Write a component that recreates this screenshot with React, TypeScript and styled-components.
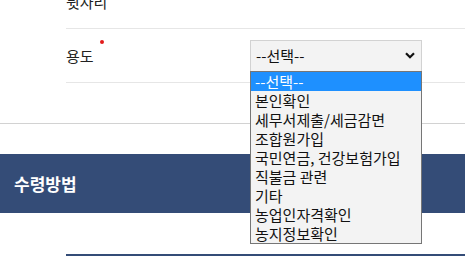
import React from 'react'
import styled, { createGlobalStyle } from 'styled-components'

const options = [
	'--선택--',
	'본인확인',
	'세무서제출/세금감면',
	'조합원가입',
	'국민연금, 건강보험가입',
	'직불금 관련',
	'기타',
	'농업인자격확인',
	'농지정보확인',
]

const GlobalStyle = createGlobalStyle`
	html, body {
		margin: 0;
		padding: 0;
		background: #fff;
		overflow: hidden;
	}
	body {
		font-family: "Noto Sans CJK KR", "Noto Sans", sans-serif;
		color: #222;
	}
`

export default function App() {
	return (
		<>
			<GlobalStyle />
			<Page>
				<FormSection>
					<Row>
						<Label>뒷자리</Label>
					</Row>
					<Row>
						<Label required>용도</Label>
						<SelectWrap>
							<SelectBox>
								<span>--선택--</span>
								<svg width="10" height="7" viewBox="0 0 10 7">
									<path d="M1 1.2 L5 5.2 L9 1.2" fill="none" stroke="#111" strokeWidth="2.2" />
								</svg>
							</SelectBox>
							<OptionList>
								{options.map((o, i) => (
									<OptionItem key={o} active={i === 0}>{o}</OptionItem>
								))}
							</OptionList>
						</SelectWrap>
					</Row>
				</FormSection>
				<Band>
					<BandTitle>수령방법</BandTitle>
				</Band>
				<BottomRule />
			</Page>
		</>
	)
}

const Page = styled.div`
	width: 465px;
	margin-top: -25px;
`

const FormSection = styled.section`
	padding-left: 66px;
	padding-bottom: 40px;
	border-bottom: 1px solid #d2d2d2;
`

const Row = styled.div`
	display: flex;
	align-items: center;
	height: 53px;
	border-bottom: 1px solid #e6e6e6;
`

const Label = styled.span<{ required?: boolean }>`
	position: relative;
	width: 184px;
	font-size: 15px;
	line-height: 20px;
	color: #222;
	&::after {
		content: '';
		display: ${p => (p.required ? 'block' : 'none')};
		position: absolute;
		left: 34px;
		top: -6px;
		width: 4px;
		height: 4px;
		border-radius: 50%;
		background: #e21b1b;
	}
`

const SelectWrap = styled.div`
	position: relative;
`

const SelectBox = styled.div`
	box-sizing: border-box;
	display: flex;
	align-items: center;
	justify-content: space-between;
	width: 172px;
	height: 32px;
	padding: 0 6px 0 5px;
	background: #f3f3f3;
	border: 1px solid #d2d2d2;
	font-size: 15px;
	color: #111;
`

const OptionList = styled.ul`
	position: absolute;
	left: 0;
	top: 31px;
	box-sizing: border-box;
	width: 172px;
	margin: 0;
	padding: 0;
	list-style: none;
	background: #f3f3f3;
	border: 1px solid #767676;
	z-index: 5;
`

const OptionItem = styled.li<{ active?: boolean }>`
	height: 19px;
	line-height: 19px;
	padding-left: 4px;
	font-size: 15px;
	white-space: nowrap;
	color: ${p => (p.active ? '#fff' : '#111')};
	background: ${p => (p.active ? '#1e90ff' : 'transparent')};
`

const Band = styled.div`
	display: flex;
	align-items: center;
	height: 59px;
	margin-top: 30px;
	padding-left: 14px;
	background: #344c77;
`

const BandTitle = styled.h2`
	margin: 0;
	font-size: 17px;
	font-weight: 700;
	color: #fff;
`

const BottomRule = styled.div`
	margin: 41px 0 0 66px;
	height: 2px;
	background: #344c77;
`
